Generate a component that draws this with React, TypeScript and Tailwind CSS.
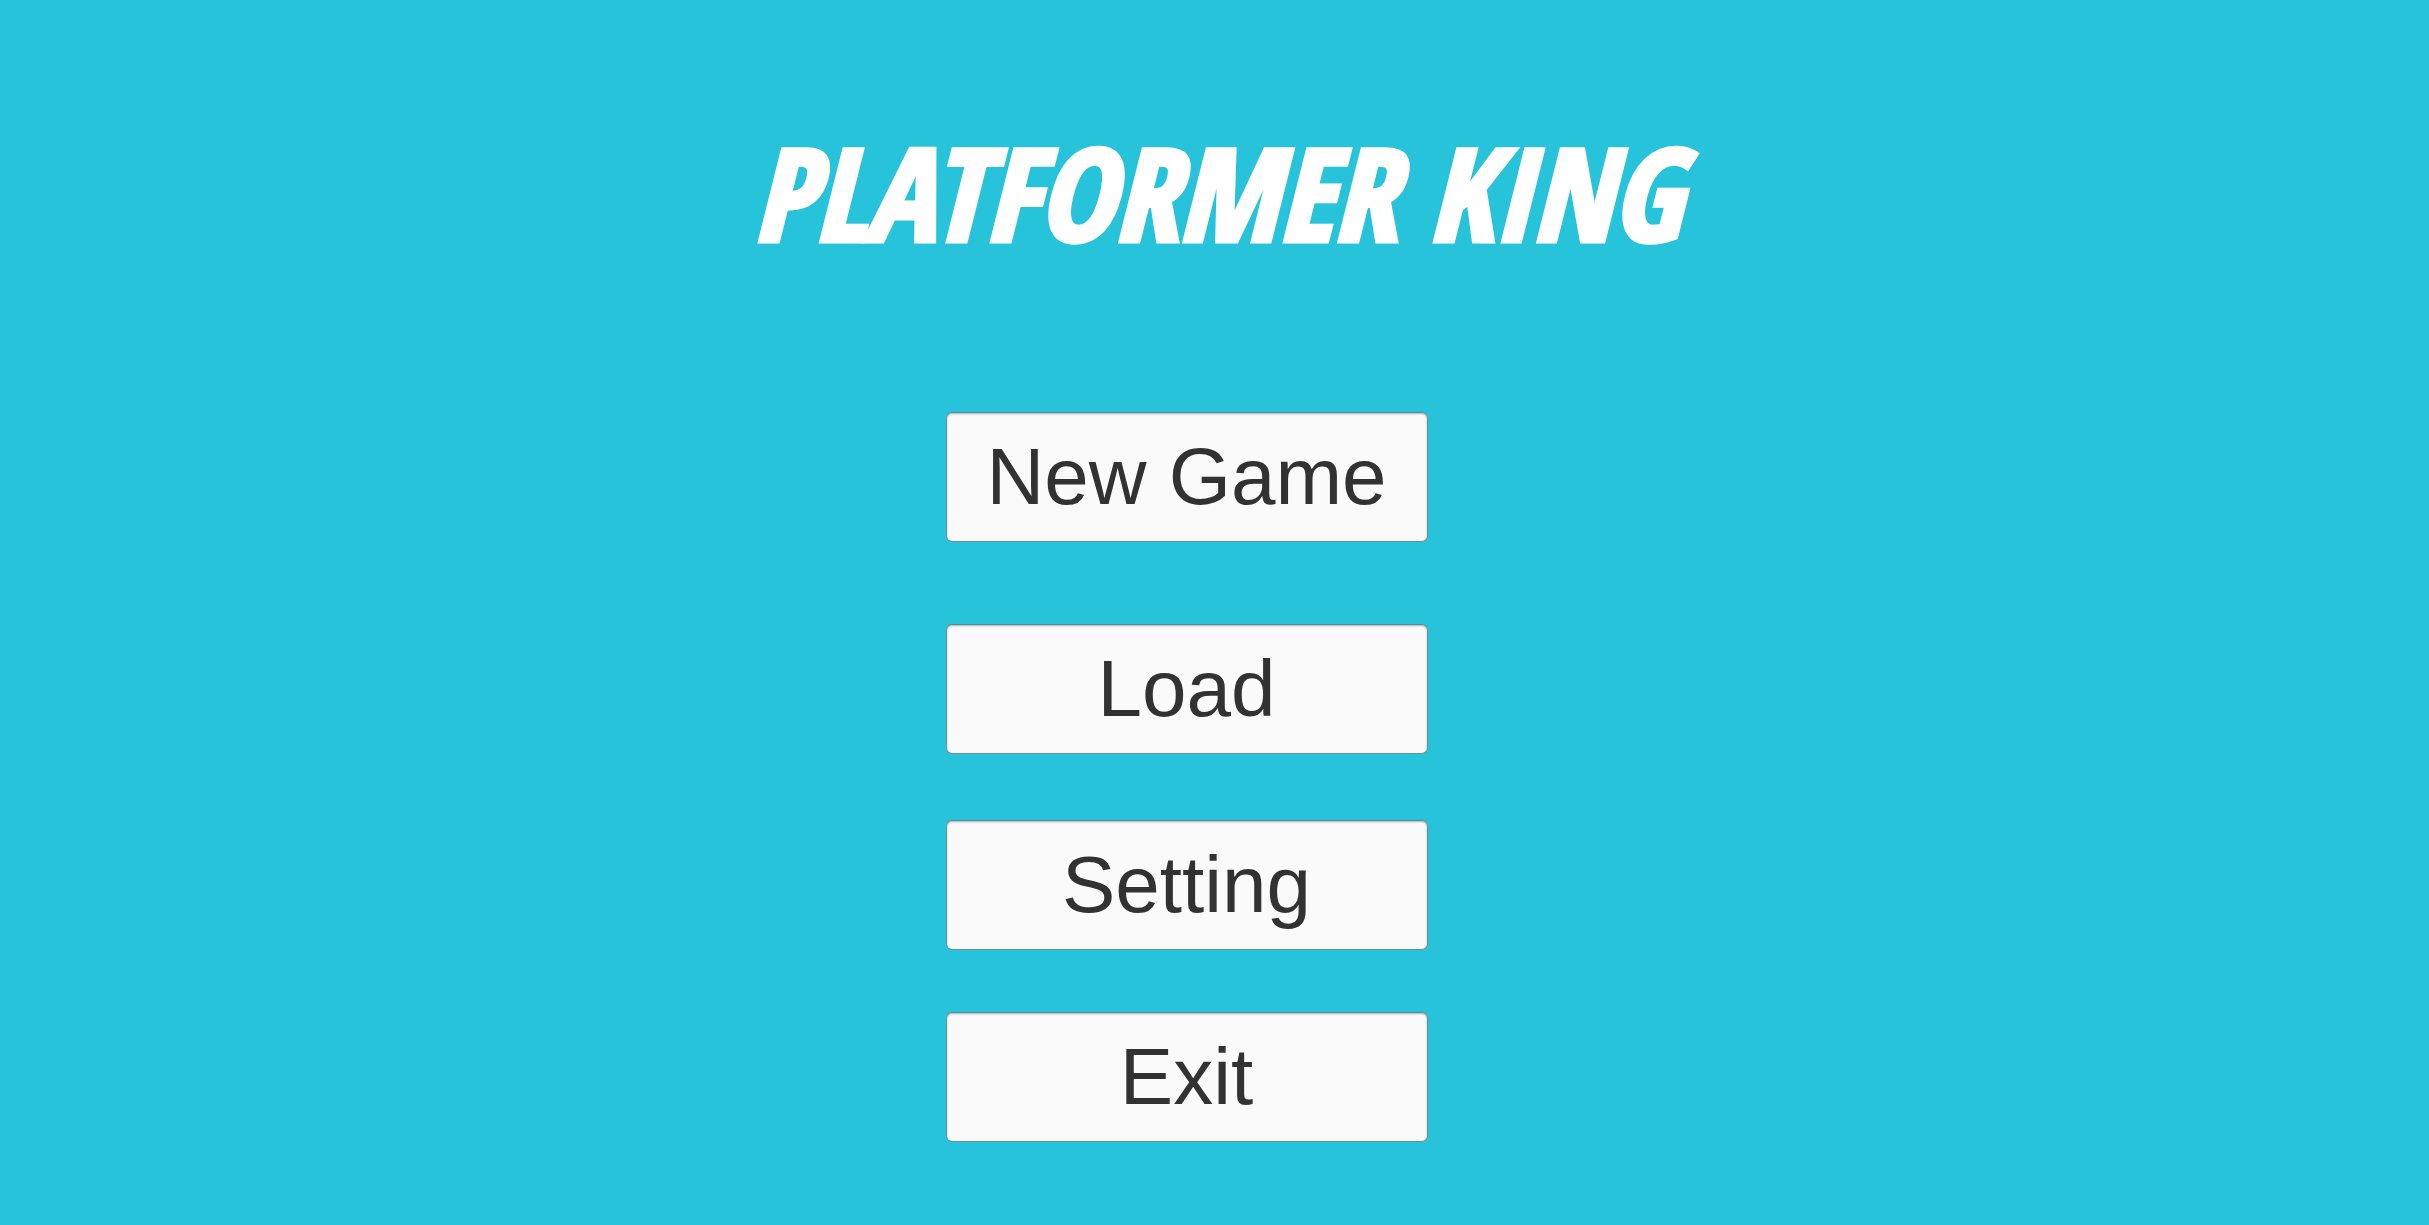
interface MenuButtonProps {
    label: string;
    spacing: string;
}

const MENU_ITEMS: MenuButtonProps[] = [
    { label: "New Game", spacing: "mt-0" },
    { label: "Load", spacing: "mt-[82px]" },
    { label: "Setting", spacing: "mt-[66px]" },
    { label: "Exit", spacing: "mt-[62px]" },
];

function MenuButton({ label, spacing }: MenuButtonProps) {
    return (
        <button
            type="button"
            className={`
        w-full h-[130px] rounded-md border border-[#6f9094] border-t-[#4d8f9a] bg-[#fafafa]
        text-[80px] leading-none text-[#323232]
        shadow-[inset_0_1px_2px_rgba(0,0,0,0.3)]
        cursor-pointer transition-colors hover:bg-[#f5f5f5] active:bg-[#c8c8c8]
        ${spacing}
      `}
        >
            {label}
        </button>
    );
}

export default function App() {
    return (
        <main className="min-h-screen bg-[#27c3da] pt-32 pb-20 font-['Liberation_Sans',Arial,sans-serif]">
            {/* The title and the menu are centred on slightly different axes */}
            <h1
                className="
          pl-1 text-center text-[128px] leading-none font-bold italic text-white
          font-['Open_Sans_Condensed','Open_Sans',sans-serif]
          [-webkit-text-stroke:5px_white]
        "
            >
                PLATFORMER KING
            </h1>

            <nav aria-label="Main menu" className="mt-[156px] flex justify-center pr-14">
                <div className="w-full max-w-[482px] flex flex-col">
                    {MENU_ITEMS.map((item) => (
                        <MenuButton key={item.label} {...item} />
                    ))}
                </div>
            </nav>
        </main>
    );
}
